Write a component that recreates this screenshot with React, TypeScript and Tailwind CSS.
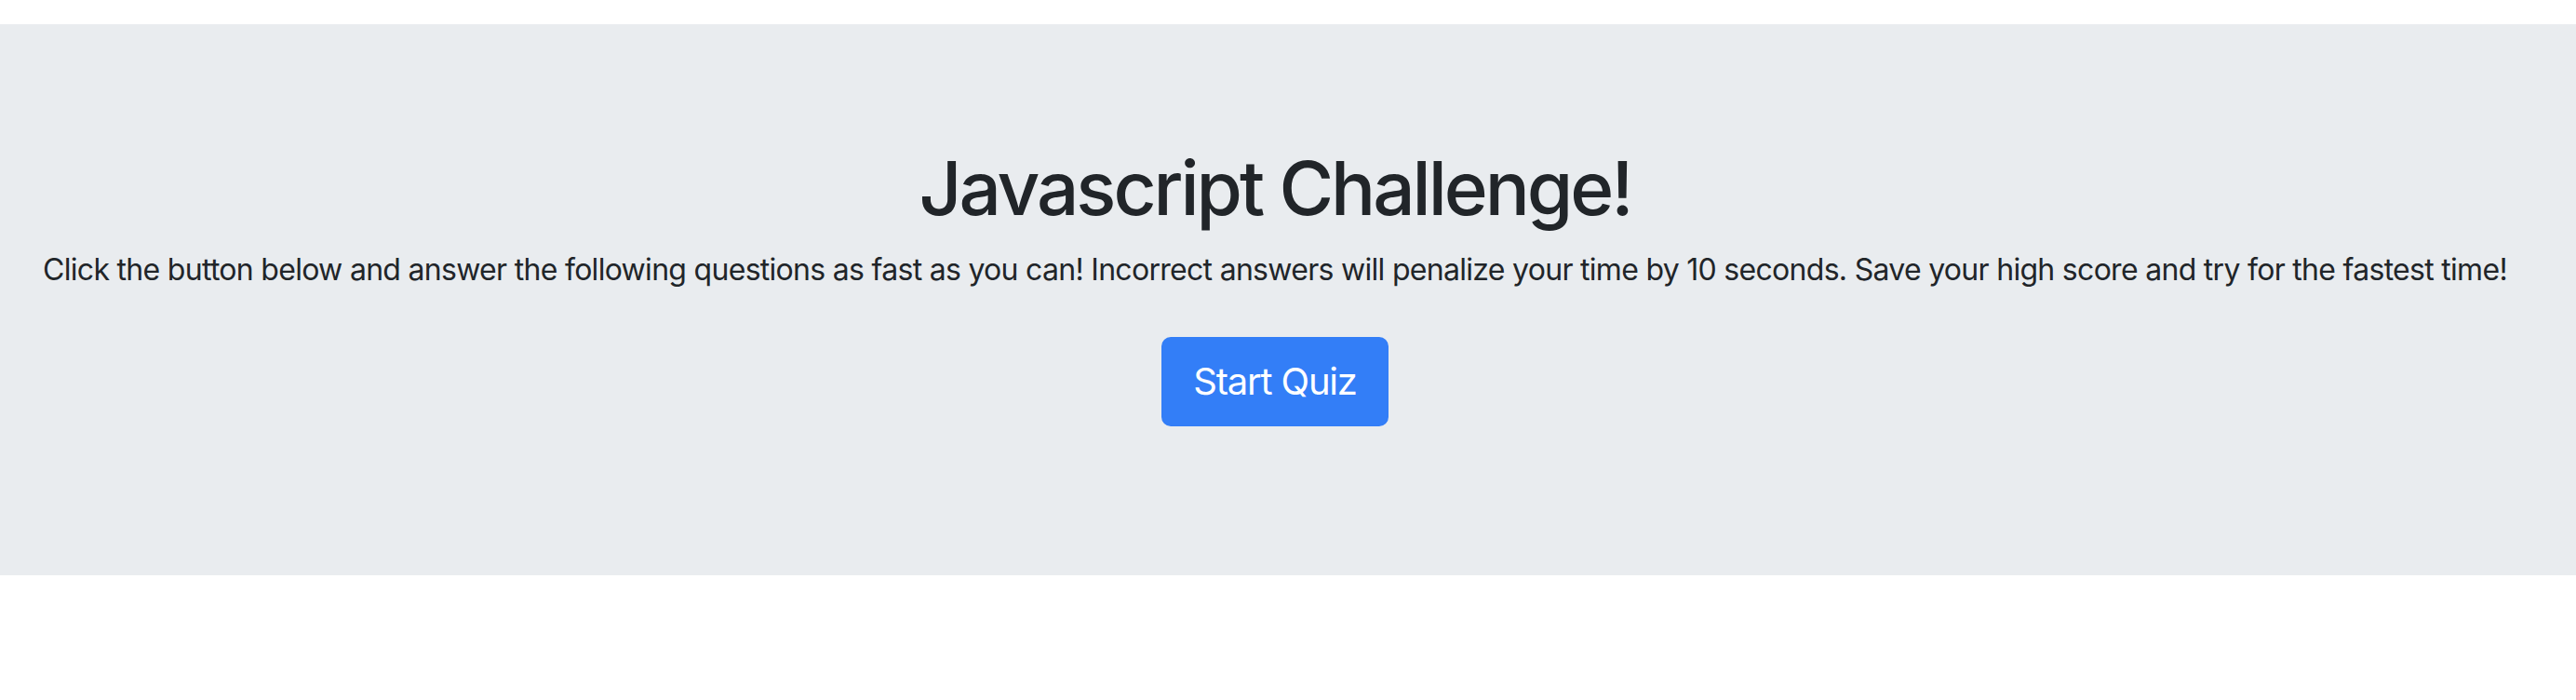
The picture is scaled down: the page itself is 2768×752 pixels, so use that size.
export default function App() {
  return (
    <div className="min-h-[752px] bg-white pt-[26px] font-['Inter','Liberation_Sans',sans-serif] text-[#212529]">
      <section className="bg-[#e9ecef] pl-[26px] pr-[54px] py-[128px] text-center">
        <h1 className="mb-[16px] text-[80px] font-medium leading-[96px] tracking-[-0.038em]">
          Javascript Challenge!
        </h1>
        <p className="mb-[48px] whitespace-nowrap text-[32px] leading-[48px] tracking-[-0.022em]">
          Click the button below and answer the following questions as fast as you can! Incorrect answers will penalize
          your time by 10 seconds. Save your high score and try for the fastest time!
        </p>
        <div className="mb-[32px] flex justify-center">
          <button className="rounded-[10px] border-2 border-[#337ef7] bg-[#337ef7] px-[32px] py-[16px] text-[40px] leading-[60px] tracking-[-0.03em] text-white">
            Start Quiz
          </button>
        </div>
      </section>
    </div>
  );
}
